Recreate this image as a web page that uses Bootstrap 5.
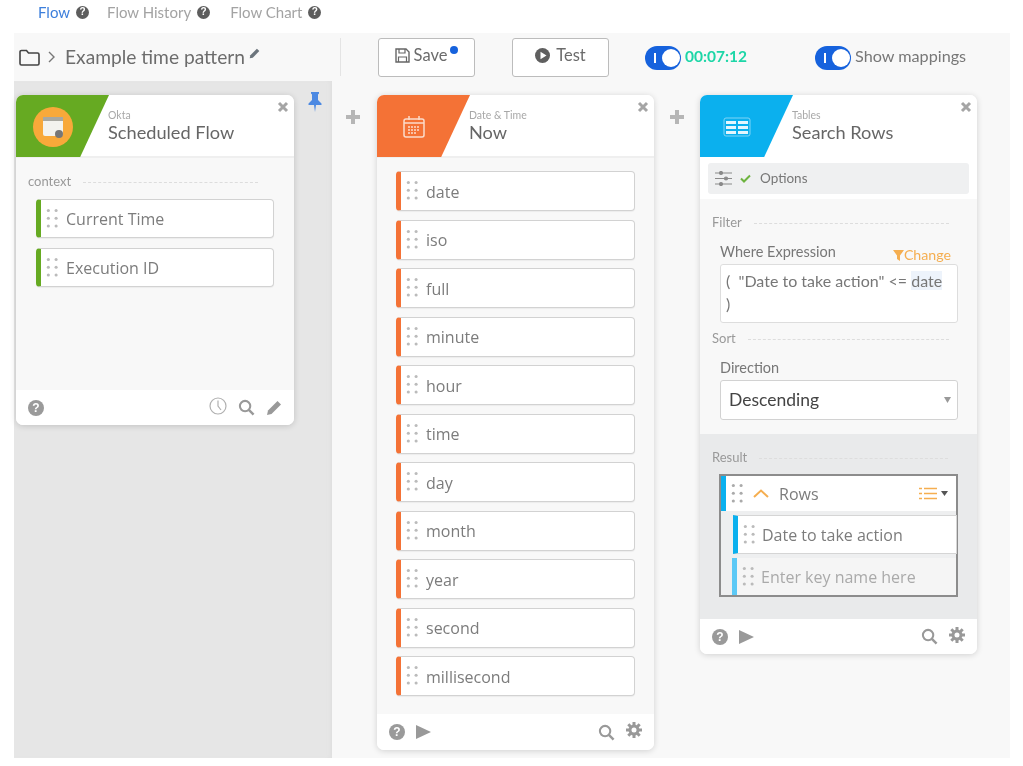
<!DOCTYPE html>
<html lang="en">
<head>
<meta charset="utf-8">
<title>Flow</title>
<link rel="stylesheet" href="https://cdn.jsdelivr.net/npm/bootstrap@5.3.0/dist/css/bootstrap.min.css">
<style>
html,body{height:766px;overflow:hidden;background:#fff}
body{font-family:Lato,"Open Sans",sans-serif;color:#777}
.tabs{height:33px;padding-left:38px;padding-bottom:9px}
.tabs a{font-size:15px;color:#a3a3a3;text-decoration:none;display:flex;align-items:center;line-height:1;height:24px}
.tabs a.on{color:#3d7fdc}
.tabs a.t2{margin-left:18px}
.tabs a.t3{margin-left:20px}
.qm{display:inline-flex;width:16px;height:16px;border-radius:50%;background:#9a9a9a;color:#fff;font:700 12px/16px "Liberation Sans",sans-serif;align-items:center;justify-content:center;flex:none}
.tabs .qm{background:#5d5d5d;width:13px;height:13px;font-size:10px;margin-left:6px}
.app{margin-left:14px;width:996px;height:725px;background:#f8f8f8}
.tbar{height:48px;padding-top:5px}
.crumb{width:326px;padding-left:5px;color:#666;height:38px}
.crumb .ttl{font-size:19.2px;margin-left:9px;color:#6c6c6c}
.vsep{width:1px;height:38px;background:#e4e4e4}
.tb-btn,.tb-btn:hover{width:97px;height:39px;background:#fff;border:1px solid #bcbcbc;border-radius:3px;font-size:16.5px;color:#6b6b6b;display:flex;align-items:center;justify-content:center;padding:0 0 5px;position:relative;gap:4px;margin-left:37px}
.tb-btn.ts{gap:6px}
.sdot{width:8px;height:8px;border-radius:50%;background:#1662dd;margin:-10px 0 0 -1px}
.tog{width:36px;height:24px;border-radius:12px;background:#1662dd;position:relative;flex:none}
.tog::before{content:"";position:absolute;left:9px;top:7px;width:2px;height:10px;background:#fff}
.tog::after{content:"";position:absolute;right:1px;top:3px;width:18px;height:18px;border-radius:50%;background:#fff}
.tgrp{margin-left:36px;height:38px;margin-top:1px}
.timer{font-weight:700;color:#1dd6a7;font-size:15.5px;margin-left:4px;width:130px;padding-bottom:3px}
.mapl{font-size:16.2px;color:#777;margin-left:4px;padding-bottom:3px}
.canvas{height:677px}
.leftp{width:318px;height:677px;background:#e6e6e6;padding:14px 0 0 2px;box-shadow:inset -4px 0 5px -3px #ddd;flex:none}
.nd{width:277px;background:#fff;border-radius:7px;box-shadow:0 1px 6px rgba(0,0,0,.16);overflow:hidden;flex:none;border:0;position:relative}
.nd.wide{width:278px}
.nh{height:63px;display:flex;border-bottom:2px solid #efefef;background:#fff}
.nh.flat{border-bottom:0}
.wedge{width:93px;height:62px;clip-path:polygon(0 0,100% 0,69% 100%,0 100%);display:flex;align-items:center;justify-content:center;padding-right:19px;padding-top:2px;flex:none}
.ni{padding-top:14px;margin-left:-1px}
.ni small{display:block;font-size:10.5px;line-height:12px;color:#a8a8a8}
.ni b{display:block;font-weight:400;font-size:18.2px;line-height:22px;color:#666}
.cx{position:absolute;right:5px;top:6px;color:#a5a5a5}
.nb{background:#f8f8f8}
.nb.b1{height:232px;padding:15px 20px 0 12px}
.nb.b2{padding:13px 19px 0;height:556px}
.nb.b3{height:235px;padding:15px 20px 0 12px}
.nf{height:35px;background:#fff;display:flex;align-items:center;padding:0 12px;color:#999}
.nf.tall{height:36px}
.nf .pl{margin-left:11px}
.ficons{gap:11px}
.lbl{font-size:13px;line-height:16px;color:#999;display:flex;align-items:center}
.lbl::after{content:"";flex:1;border-top:1px dashed #ddd;margin:3px 8px 0 12px}
.fld{height:40px;background:#fff;border:1px solid #d2d2d2;border-left:5px solid #f47236;border-radius:4px;display:flex;align-items:center;font:400 16px/1 "Open Sans",sans-serif;color:#7c7c7c;margin-bottom:8.5px;padding-top:1px;box-shadow:0 1px 1px rgba(0,0,0,.05)}
.fld svg.dr{margin:-1px 6px 0 5px;color:#bbb;flex:none}
.fg{border-left-color:#66aa22;height:39px;margin-bottom:10px}
.flist{margin-left:8px;padding-top:2px;width:238px}
.pls{color:#b6b6b6;flex:none}
.pls.p1{margin:29px 17px 0 14px}
.pls.p2{margin:29px 16px 0}
.cardtop{margin-top:14px}
.pin{margin:-3px 0 0 13px;flex:none}
.opt{padding:5px 8px}
.optb{height:31px;background:#eff0f1;border-radius:3px;display:flex;align-items:center;padding-left:7px;font-size:13.5px;color:#777}
.optb span{margin-left:9px;padding-bottom:1px}
.fwrap{margin:14px -1px 0 8px}
.fl{font-size:14.5px;line-height:16px;color:#777;display:flex;justify-content:space-between}
.chg{color:#f5ae50;font-size:14.2px;display:flex;align-items:center;padding-top:3px;margin:0 7px -3px 0}
.ta{height:59px;background:#fff;border:1px solid #ddd;border-radius:3px;font-size:16px;line-height:23px;padding:4px 5px;color:#777;margin-top:4px;white-space:nowrap}
.ta mark{padding:0;background:#edf3fb;color:#777}
.sel{height:40px;background:#fff;border:1px solid #d2d2d2;border-radius:3px;font-size:17.5px;color:#444;display:flex;align-items:center;justify-content:space-between;padding:0 6px 0 8px;margin-top:4px}
.sorthd{margin-top:7px}
.res{background:#e9eaeb;height:185px;padding:15px 21px 0 12px}
.rbox{margin:9px 0 0 7px;width:239px;height:123px;border:2px solid #8c8c8c;background:#eeeff0;box-sizing:border-box}
.rr{height:35px;background:#fff;border-left:5px solid #0bb0ee;display:flex;align-items:center;font:400 16px/1 "Open Sans",sans-serif;color:#7c7c7c}
.rr svg.dr{margin:0 0 0 5px;color:#aaa}
.rr .rw{margin-left:10px}
.rk{height:39px;margin:4px -1px 0 12px;background:#fff;border:1px solid #d5d5d5;border-left:5px solid #0bb0ee;display:flex;align-items:center;font:400 16px/1 "Open Sans",sans-serif;color:#7c7c7c}
.rk svg.dr{margin:0 5px 0 5px;color:#bbb}
.rk.em{background:#f5f5f5;border:0;border-left:5px solid #5cc9f6;color:#aaa;margin:4px 0 0 11px;height:37px}
.blur{filter:blur(.45px)}
</style>
</head>
<body>
<svg width="0" height="0" class="position-absolute">
<defs>
<symbol id="dots" viewBox="0 0 18 30"><g fill="currentColor"><circle cx="3" cy="4" r="2"/><circle cx="13" cy="4" r="2"/><circle cx="3" cy="14" r="2"/><circle cx="13" cy="14" r="2"/><circle cx="3" cy="24" r="2"/><circle cx="13" cy="24" r="2"/></g></symbol>
<symbol id="x" viewBox="0 0 12 12"><path d="M2 2l8 8M10 2l-8 8" stroke="currentColor" stroke-width="3" fill="none"/></symbol>
<symbol id="plus" viewBox="0 0 14 14"><path d="M7 0v14M0 7h14" stroke="currentColor" stroke-width="4" fill="none"/></symbol>
<symbol id="srch" viewBox="0 0 18 18"><circle cx="7.5" cy="7.5" r="5.5" fill="none" stroke="currentColor" stroke-width="2.2"/><path d="M11.5 11.5l5 5" stroke="currentColor" stroke-width="2.6" fill="none"/></symbol>
<symbol id="gear" viewBox="0 0 16 16"><circle cx="8" cy="8" r="4" fill="none" stroke="currentColor" stroke-width="3"/><path d="M8 0v3M8 13v3M0 8h3M13 8h3M2.3 2.3l2.2 2.2M11.5 11.5l2.2 2.2M13.7 2.3l-2.2 2.2M4.5 11.5l-2.2 2.2" stroke="currentColor" stroke-width="3" fill="none"/></symbol>
<symbol id="play" viewBox="0 0 15 16"><path d="M0 1l15 7L0 15z" fill="currentColor"/></symbol>
<symbol id="pen" viewBox="0 0 16 16"><path d="M11.5 1l3.5 3.5-9.500 9.500L1 15l1-4.500z" fill="currentColor"/></symbol>
</defs>
</svg>

<nav class="nav tabs align-items-center blur">
<a class="on" href="#">Flow<span class="qm">?</span></a>
<a class="t2" href="#">Flow History<span class="qm">?</span></a>
<a class="t3" href="#">Flow Chart<span class="qm">?</span></a>
</nav>

<div class="app blur">
<div class="tbar d-flex align-items-start">
<div class="crumb d-flex align-items-center">
<svg width="21" height="17" viewBox="0 0 21 17"><path d="M1 3a1.500 1.500 0 0 1 1.500-1.500h5L9.500 4h9A1.500 1.500 0 0 1 20 5.500v9a1.500 1.500 0 0 1-1.500 1.500h-16A1.500 1.500 0 0 1 1 14.500z" fill="none" stroke="#444" stroke-width="1.600"/></svg>
<svg width="8" height="12" viewBox="0 0 8 12" class="ms-2"><path d="M1 1l5 5-5 5" fill="none" stroke="#777" stroke-width="1.400"/></svg>
<span class="ttl">Example time pattern</span>
<svg width="11" height="11" viewBox="0 0 16 16" class="ms-1 mb-2 text-secondary"><use href="#pen"/></svg>
</div>
<div class="vsep"></div>
<button class="btn tb-btn" type="button">
<svg width="15" height="15" viewBox="0 0 15 15"><path d="M1 1h10l3 3v10H1z" fill="none" stroke="#666" stroke-width="1.400"/><path d="M4 1v4h6V1M3.500 14V9h8v5" fill="none" stroke="#666" stroke-width="1.200"/></svg>
<span>Save</span><span class="sdot"></span>
</button>
<button class="btn tb-btn ts" type="button">
<svg width="15" height="15" viewBox="0 0 15 15"><circle cx="7.500" cy="7.500" r="7.500" fill="#5f5f5f"/><path d="M5.500 3.800l6 3.700-6 3.700z" fill="#fff"/></svg>
<span>Test</span>
</button>
<div class="d-flex align-items-center tgrp">
<span class="tog"></span><span class="timer">00:07:12</span>
<span class="tog"></span><span class="mapl">Show mappings</span>
</div>
</div>

<div class="canvas d-flex align-items-start">
<div class="leftp d-flex align-items-start">
<div class="card nd wide">
<div class="nh">
<div class="wedge" style="background:#66aa22">
<svg width="42" height="42" viewBox="0 0 42 42"><circle cx="21" cy="21" r="20" fill="#f8a93a"/><rect x="11" y="13" width="20" height="17" rx="2" fill="#f3f3ee"/><rect x="11" y="11" width="20" height="4" fill="#a8a8a0"/><circle cx="27" cy="28" r="4" fill="#777"/></svg>
</div>
<div class="ni"><small>Okta</small><b>Scheduled Flow</b></div>
</div>
<svg class="cx" width="12" height="12"><use href="#x"/></svg>
<div class="nb b1">
<div class="lbl mb-2 me-2">context</div>
<div class="flist">
<div class="fld fg"><svg class="dr" width="14" height="24"><use href="#dots"/></svg>Current Time</div>
<div class="fld fg"><svg class="dr" width="14" height="24"><use href="#dots"/></svg>Execution ID</div>
</div>
</div>
<div class="nf">
<span class="qm">?</span>
<span class="ms-auto d-flex align-items-center ficons">
<svg width="18" height="18" viewBox="0 0 18 18" class="mb-1"><circle cx="9" cy="9" r="8" fill="none" stroke="#b0b0b0" stroke-width="1.200"/><path d="M9 3.500V9l3 4" fill="none" stroke="#b0b0b0" stroke-width="1.200"/></svg>
<svg width="17" height="17"><use href="#srch"/></svg>
<svg width="16" height="16"><use href="#pen"/></svg>
</span>
</div>
</div>
<svg class="pin" width="16" height="20" viewBox="0 0 16 20"><path d="M4 0h8v1.500l-1 1V8l3.500 3.500V13H9l-1 7-1-7H1.500v-1.500L5 8V2.500l-1-1z" fill="#4c89e2"/></svg>
</div>

<svg class="pls p1" width="14" height="14"><use href="#plus"/></svg>

<div class="card nd cardtop">
<div class="nh">
<div class="wedge" style="background:#f47236">
<svg width="24" height="24" viewBox="0 0 24 24" fill="none" stroke="#fbdccb" stroke-width="1.500"><rect x="2" y="4" width="20" height="18" rx="2"/><path d="M7 1v4M17 1v4M2 8h20"/><path d="M6 12h12M6 15h12M6 18h8" stroke-dasharray="2 1"/></svg>
</div>
<div class="ni"><small>Date &amp; Time</small><b>Now</b></div>
</div>
<svg class="cx" width="12" height="12"><use href="#x"/></svg>
<div class="nb b2">
<div class="fld"><svg class="dr" width="14" height="24"><use href="#dots"/></svg>date</div>
<div class="fld"><svg class="dr" width="14" height="24"><use href="#dots"/></svg>iso</div>
<div class="fld"><svg class="dr" width="14" height="24"><use href="#dots"/></svg>full</div>
<div class="fld"><svg class="dr" width="14" height="24"><use href="#dots"/></svg>minute</div>
<div class="fld"><svg class="dr" width="14" height="24"><use href="#dots"/></svg>hour</div>
<div class="fld"><svg class="dr" width="14" height="24"><use href="#dots"/></svg>time</div>
<div class="fld"><svg class="dr" width="14" height="24"><use href="#dots"/></svg>day</div>
<div class="fld"><svg class="dr" width="14" height="24"><use href="#dots"/></svg>month</div>
<div class="fld"><svg class="dr" width="14" height="24"><use href="#dots"/></svg>year</div>
<div class="fld"><svg class="dr" width="14" height="24"><use href="#dots"/></svg>second</div>
<div class="fld"><svg class="dr" width="14" height="24"><use href="#dots"/></svg>millisecond</div>
</div>
<div class="nf tall">
<span class="qm">?</span>
<svg class="pl" width="15" height="16"><use href="#play"/></svg>
<span class="ms-auto d-flex align-items-center ficons">
<svg width="17" height="17"><use href="#srch"/></svg>
<svg width="16" height="16" class="mb-1"><use href="#gear"/></svg>
</span>
</div>
</div>

<svg class="pls p2" width="14" height="14"><use href="#plus"/></svg>

<div class="card nd cardtop">
<div class="nh flat">
<div class="wedge" style="background:#0bb0ee">
<svg width="28" height="20" viewBox="0 0 28 20"><rect x="1" y="1" width="26" height="18" rx="2" fill="none" stroke="#7fd4f6" stroke-width="1"/><g fill="#e3f6fe"><rect x="3" y="4" width="10" height="3"/><rect x="15" y="4" width="10" height="3"/><rect x="3" y="9" width="10" height="3"/><rect x="15" y="9" width="10" height="3"/><rect x="3" y="14" width="10" height="3"/><rect x="15" y="14" width="10" height="3"/></g></svg>
</div>
<div class="ni"><small>Tables</small><b>Search Rows</b></div>
</div>
<svg class="cx" width="12" height="12"><use href="#x"/></svg>
<div class="opt">
<div class="optb">
<svg width="17" height="15" viewBox="0 0 17 15" fill="none" stroke="#8a8a8a" stroke-width="1.200"><path d="M0 2h17M0 7.500h17M0 13h17"/><circle cx="6" cy="2" r="1.500" fill="#8a8a8a"/><circle cx="11" cy="7.500" r="1.500" fill="#8a8a8a"/><circle cx="6" cy="13" r="1.500" fill="#8a8a8a"/></svg>
<svg width="11" height="9" viewBox="0 0 11 9" class="ms-2" fill="none" stroke="#6db33f" stroke-width="2"><path d="M1 4.500l3 3 6-6"/></svg>
<span>Options</span>
</div>
</div>
<div class="nb b3">
<div class="lbl">Filter</div>
<div class="fwrap">
<div class="fl"><span>Where Expression</span><span class="chg"><svg width="11" height="11" viewBox="0 0 11 11"><path d="M0 0h11L7 5.500V11L4 9V5.500z" fill="#f5ae50"/></svg>Change</span></div>
<div class="ta">( &nbsp;"Date to take action" &lt;= <mark>date</mark><br>)</div>
</div>
<div class="lbl sorthd">Sort</div>
<div class="fwrap">
<div class="fl"><span>Direction</span></div>
<div class="sel"><span>Descending</span><svg width="7" height="6" viewBox="0 0 7 6"><path d="M0 0h7L3.500 6z" fill="#999"/></svg></div>
</div>
</div>
<div class="res">
<div class="lbl">Result</div>
<div class="rbox">
<div class="rr"><svg class="dr" width="14" height="24"><use href="#dots"/></svg>
<svg width="16" height="9" viewBox="0 0 16 9" class="ms-2" fill="none" stroke="#f5ae50" stroke-width="2"><path d="M1 8l7-6.500L15 8"/></svg>
<span class="rw">Rows</span>
<svg width="18" height="13" viewBox="0 0 18 13" class="ms-auto" fill="none" stroke="#f5ae50" stroke-width="1.400"><path d="M5 1.500h13M5 6.500h13M5 11.500h13M0 1.500h3M0 6.500h3M0 11.500h3"/></svg>
<svg width="7" height="5" viewBox="0 0 7 5" class="ms-1 me-2"><path d="M0 0h7L3.500 5z" fill="#555"/></svg>
</div>
<div class="rk"><svg class="dr" width="14" height="24"><use href="#dots"/></svg>Date to take action</div>
<div class="rk em"><svg class="dr" width="14" height="24"><use href="#dots"/></svg>Enter key name here</div>
</div>
</div>
<div class="nf">
<span class="qm">?</span>
<svg class="pl" width="15" height="16"><use href="#play"/></svg>
<span class="ms-auto d-flex align-items-center ficons">
<svg width="17" height="17"><use href="#srch"/></svg>
<svg width="16" height="16" class="mb-1"><use href="#gear"/></svg>
</span>
</div>
</div>
</div>
</div>
</body>
</html>
